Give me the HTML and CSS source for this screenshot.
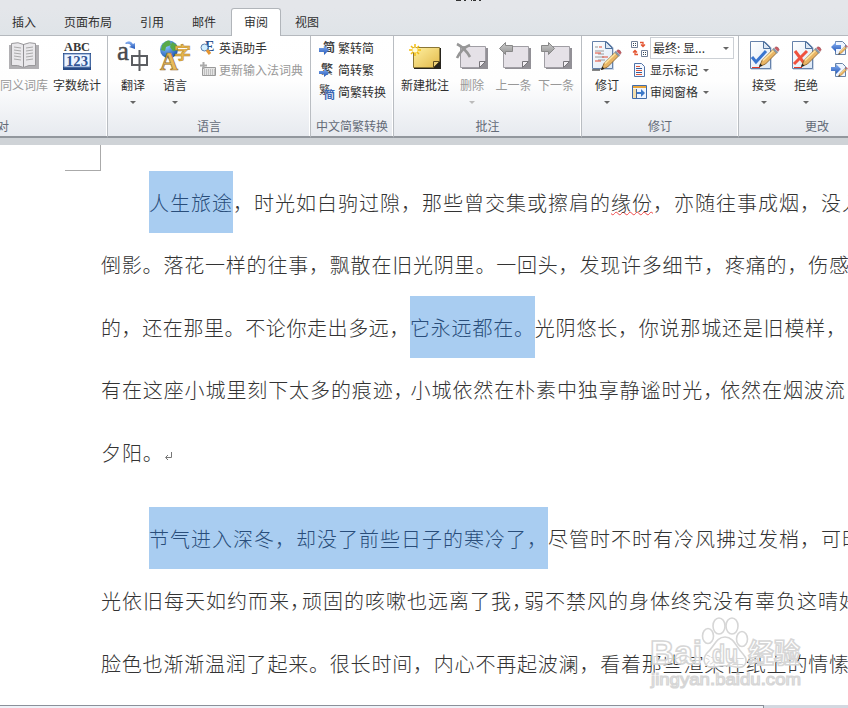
FILE: index.html
```html
<!DOCTYPE html>
<html lang="zh-CN">
<head>
<meta charset="utf-8">
<title>审阅</title>
<link rel="stylesheet" href="styles.css">
</head>
<body>
<svg class="defs" width="0" height="0">
  <defs>
    <linearGradient id="blue" x1="0" y1="0" x2="0" y2="1"><stop offset="0" stop-color="#8ab4f4"/><stop offset="1" stop-color="#2457b8"/></linearGradient>
    <linearGradient id="gold" x1="0" y1="0" x2="1" y2="1"><stop offset="0" stop-color="#fff0a0"/><stop offset="1" stop-color="#e2b94a"/></linearGradient>
    <linearGradient id="gray" x1="0" y1="0" x2="0" y2="1"><stop offset="0" stop-color="#ccc"/><stop offset="1" stop-color="#929292"/></linearGradient>
    <linearGradient id="paper" x1="0" y1="0" x2="1" y2="1"><stop offset="0" stop-color="#fff"/><stop offset="1" stop-color="#dce8f6"/></linearGradient>
    <radialGradient id="globe" cx=".35" cy=".3" r=".8"><stop offset="0" stop-color="#8ccaff"/><stop offset="1" stop-color="#124bad"/></radialGradient>
    <symbol id="note" viewBox="0 0 32 32">
      <path d="M4 8h26v21H4z" fill="#929096"/><path d="M2.500 6.500h25v15l-6 6h-19z" fill="#e5e1e7" stroke="#a09ea4"/><path d="M21.500 27.500v-6h6z" fill="#f2eff3" stroke="#77757a"/>
    </symbol>
    <symbol id="pencil" viewBox="0 0 22 22">
      <path d="M1.500 20.500L4 14.500 15 3.500l3.500 3.500L7.500 18z" fill="#e9b565" stroke="#8c642c" stroke-width=".9"/><path d="M5 14.500L15.500 4.500" stroke="#ffe7a4" stroke-width="1.500"/><path d="M1 21l1.200-3.500 2.300 2.200z" fill="#222"/><path d="M16.500 2l1.500-1.200q2.500.2 3.200 3L20 5.500z" fill="#cf5a62" stroke="#9b555b" stroke-width=".6"/><path d="M15 2.500l4.500 4.500" stroke="#8799a7" stroke-width="1.800"/>
    </symbol>
    <symbol id="page" viewBox="0 0 24 32">
      <path d="M2 2h15l6 6v22H2z" fill="#9ab0cc" opacity=".5"/><path d="M1.500 1.500h14l6 6v21h-20z" fill="url(#paper)" stroke="#6581aa"/><path d="M14.500 1.500v7h7z" fill="#dce6f2" stroke="#50739e"/>
    </symbol>
  </defs>
</svg>
<div class="window">
  <header class="titlebar"><svg width="30" height="2"><path d="M1 0h5v1H1zM9 0h2v1H9zM16 0h1v1h-1zM18 0h3v1h-3zM24 0h2v1h-2z" fill="#333"/></svg></header>
  <nav class="tabs">
    <span class="tab t1">插入</span><span class="tab t2">页面布局</span><span class="tab t3">引用</span><span class="tab t4">邮件</span><span class="tab active">审阅</span><span class="tab t6">视图</span>
  </nav>

  <section class="ribbon">
    <div class="group proofing">
      <div class="tools">
        <div class="big disabled w48"><svg width="34" height="32" viewBox="0 0 34 32"><path d="M2 5h30v24H2z" fill="#b1b0b3"/><path d="M4.500 3.500q7-2 12 1 6-3 12-1v22q-7-1-12 2-6-3-12-2z" fill="#e9e8eb" stroke="#99989b"/><path d="M16.500 4v23" stroke="#929195"/><path d="M7 7l7 1M7 10l7 1M7 13l7 1M7 16l7 1M7 19l7 1M19 8l7-1M19 11l7-1M19 14l7-1M19 17l7-1M19 20l7-1" stroke="#aaa"/></svg><b>同义词库</b></div>
        <div class="big w58"><svg width="32" height="32" viewBox="0 0 32 32"><text x="3" y="11" class="abc" textLength="26" lengthAdjust="spacingAndGlyphs">ABC</text><path d="M2 13h28v17H2z" fill="#284a85"/><path d="M3 14h26v13H3z" fill="#edf4ff" stroke="#6487bd"/><text x="5" y="26" class="n123" textLength="22" lengthAdjust="spacingAndGlyphs">123</text></svg><b>字数统计</b></div>
      </div>
      <div class="caption">校对</div>
    </div>

    <div class="group language">
      <div class="tools">
        <div class="big w42"><svg width="34" height="32" viewBox="0 0 34 32"><text x="1" y="20" class="latin">a</text><path d="M9 3q5-4 8 1l2-1v6l-6-2 2-1q-1-3-5-2z" fill="url(#blue)"/><path d="M16 16h15v9H16zM23.500 10v21" fill="none" stroke="#5b5d61" stroke-width="2"/></svg><b>翻译</b><i></i></div>
        <div class="big w42"><svg width="34" height="32" viewBox="0 0 34 32"><circle cx="11" cy="9.500" r="9" fill="url(#globe)"/><path d="M4 5q5-6 8-4l1 4-5 2-1 4-4-1zM14 2l5 3 1 5-5 1-3-4z" fill="#59a94a"/><text x="16" y="19" class="goldword">字</text><text x="2" y="30" class="goldletter">A</text></svg><b>语言</b><i></i></div>
        <div class="stack">
          <div class="small"><svg width="17" height="16" viewBox="0 0 17 16"><text x="5" y="11" class="eletter">E</text><circle cx="4.500" cy="7.500" r="3.500" fill="#d2efff" stroke="#5c7eac"/><path d="M7 10l3 4" stroke="#e59632" stroke-width="3"/></svg><b>英语助手</b></div>
          <div class="small disabled"><svg width="17" height="16" viewBox="0 0 17 16"><path d="M2.500 5.500h13v8h-13z" fill="#e4e4e4" stroke="#999"/><path d="M4 8h11M4 10h11M4 12h11" stroke="#999" stroke-dasharray="1 1"/><path d="M0 3.500h7M3.500 0v7" stroke="#aaa" stroke-width="2"/></svg><b>更新输入法词典</b></div>
        </div>
      </div>
      <div class="caption">语言</div>
    </div>

    <div class="group convert">
      <div class="tools">
        <div class="stack">
          <div class="small"><svg width="17" height="16" viewBox="0 0 17 16"><text x="4" y="12" class="glyph">简</text><path d="M0 8h5V5l5 5-5 5v-3H0z" fill="url(#blue)"/></svg><b>繁转简</b></div>
          <div class="small"><svg width="17" height="16" viewBox="0 0 17 16"><text x="2" y="12" class="glyph">繁</text><path d="M0 9h5V6l5 5-5 4v-3H0z" fill="url(#blue)"/></svg><b>简转繁</b></div>
          <div class="small"><svg width="17" height="16" viewBox="0 0 17 16"><text x="0" y="10" class="glyph thin">繁</text><text x="5" y="15" class="glyph azure">简</text></svg><b>简繁转换</b></div>
        </div>
      </div>
      <div class="caption">中文简繁转换</div>
    </div>

    <div class="group comments">
      <div class="tools">
        <div class="big w54"><svg width="34" height="32" viewBox="0 0 34 32"><path d="M6 8h27v21H6z" fill="#27241d"/><path d="M5.500 7.500h26v14l-6 6h-20z" fill="url(#gold)" stroke="#8a7635"/><path d="M25.500 27.500v-6h6z" fill="#ecd079" stroke="#5e4c1f"/><path d="M7 4v12M1 10h12M3 6l8 8M11 6l-8 8" stroke="#f2bd12" stroke-width="1.500"/><circle cx="7" cy="10" r="2.500" fill="#fffbd8"/></svg><b>新建批注</b></div>
        <div class="big disabled w40"><svg width="34" height="32" viewBox="0 0 34 32"><use href="#note" x="3" width="32" height="32"/><path d="M2 4q8 4 13 13M15 5Q7 8 2 18" fill="none" stroke="#969696" stroke-width="2.600"/></svg><b>删除</b><i></i></div>
        <div class="big disabled w43"><svg width="34" height="32" viewBox="0 0 34 32"><use href="#note" x="4" width="32" height="32"/><path d="M2.500 8.500l6-6v3h7v6h-7v3z" fill="url(#gray)" stroke="#888"/></svg><b>上一条</b></div>
        <div class="big disabled w42"><svg width="34" height="32" viewBox="0 0 34 32"><use href="#note" x="3" width="32" height="32"/><path d="M15.500 8.500l-6-6v3h-7v6h7v3z" fill="url(#gray)" stroke="#888"/></svg><b>下一条</b></div>
      </div>
      <div class="caption">批注</div>
    </div>

    <div class="group tracking">
      <div class="tools">
        <div class="big w42"><svg width="32" height="32" viewBox="0 0 32 32"><use href="#page" width="24" height="32"/><path d="M4 7h3M4 11h9M7 14h6M4 17h9M7 20h7" stroke="#999"/><path d="M8 7h3M4 13h6M11 17h6M4 21h6" stroke="#e34a34"/><path d="M1 30h8" stroke="#111"/><use href="#pencil" x="9" y="9" width="22" height="22"/></svg><b>修订</b><i></i></div>
        <div class="stack">
          <div class="small view"><svg width="17" height="17" viewBox="0 0 17 17"><path d="M.5 1.500h6v6h-6zM10.500 10.500h6v6h-6z" fill="#fff" stroke="#718098"/><path d="M2 3.500h3M2 5.500h3M12 12.500h3M12 14.500h3" stroke="#345" stroke-dasharray="1 1"/><path d="M9 2.500h3v4m-2-2l2 2 2-2M7 14.500H4v-4m-2 2l2-2 2 2" fill="none" stroke="#e35431" stroke-width="1.300"/></svg><span class="select"><b>最终: 显...</b><i></i></span></div>
          <div class="small"><svg width="17" height="16" viewBox="0 0 17 16"><path d="M3.500 1.500h7l3 3v10h-10z" fill="#f4f8ff" stroke="#5073a9"/><path d="M5 4.500h4M5 8.500h6M5 12.500h6" stroke="#e45839"/><path d="M5 6.500h6M5 10.500h6" stroke="#345c96"/></svg><b>显示标记</b><i></i></div>
          <div class="small"><svg width="17" height="16" viewBox="0 0 17 16"><path d="M1.500 1.500h14v13h-14z" fill="#eef5ff" stroke="#416ca9"/><path d="M2 2h13v2H2z" fill="#e8a43a"/><path d="M2 5h4v9H2z" fill="#f3dfae"/><path d="M6 8h4V5l4 4-4 4v-3H6z" fill="#3c79c9"/><path d="M5.500 5v9" stroke="#4b6794"/></svg><b>审阅窗格</b><i></i></div>
        </div>
      </div>
      <div class="caption">修订</div>
    </div>

    <div class="group changes">
      <div class="tools">
        <div class="big w42"><svg width="32" height="32" viewBox="0 0 32 32"><use href="#page" x="1" width="24" height="32"/><path d="M4 17l4 5 10-11" fill="none" stroke="#3975cf" stroke-width="3"/><path d="M4 27.500h8" stroke="#e43b2a"/><use href="#pencil" x="10" y="6" width="22" height="22"/></svg><b>接受</b><i></i></div>
        <div class="big w42"><svg width="32" height="32" viewBox="0 0 32 32"><use href="#page" x="1" width="24" height="32"/><path d="M5 11l9 12M17 11L4 24" fill="none" stroke="#ef513e" stroke-width="3"/><path d="M4 27.500h8" stroke="#e43b2a"/><use href="#pencil" x="10" y="6" width="22" height="22"/></svg><b>拒绝</b><i></i></div>
        <div class="stack">
          <div class="small"><svg width="17" height="16" viewBox="0 0 17 16"><path d="M4.500 1.500h7l3 3v10h-10z" fill="#eef5ff" stroke="#6984a8"/><path d="M0 7l5-5v3h5v4H5v3z" fill="url(#blue)"/><use href="#pencil" x="7" y="5" width="10" height="10"/></svg></div>
          <div class="small"><svg width="17" height="16" viewBox="0 0 17 16"><path d="M4.500 1.500h7l3 3v10h-10z" fill="#eef5ff" stroke="#6984a8"/><path d="M10 7L5 2v3H0v4h5v3z" fill="url(#blue)"/><use href="#pencil" x="7" y="5" width="10" height="10"/></svg></div>
        </div>
      </div>
      <div class="caption">更改</div>
    </div>
  </section>

  <main class="document">
    <div class="corner"></div>
    <p>
      <span class="line indent p210"><mark>人生旅途</mark>，时光如白驹过隙，那些曾交集或擦肩的<u>缘份</u>，亦随往事成烟，没入</span>
      <span class="line p208">倒影。落花一样的往事，飘散在旧光阴里。一回头，发现许多细节，疼痛的，伤感</span>
      <span class="line p208"><span class="p206">的，还在那里。不论你走出多远，</span><mark>它永远都在。</mark>光阴悠长，你说那城还是旧模样，</span>
      <span class="line p209">有在这座小城里刻下太多的痕迹<span class="c17">，</span>小城依然在朴素中独享静谧时光<span class="c17">，</span>依然在烟波流</span>
      <span class="line p209">夕阳。<svg class="return" width="9" height="9" viewBox="0 0 9 9"><path d="M7.500 0v5.500H2M4 3L1.500 5.500 4 8" fill="none" stroke="#777"/></svg></span>
    </p>
    <p>
      <span class="line indent p210"><mark>节气进入深冬，却没了前些日子的寒冷了，</mark>尽管时不时有冷风拂过发梢，可时</span>
      <span class="line p210">光依旧每天如约而来<span class="c12">，</span>顽固的咳嗽也远离了我<span class="c12">，</span>弱不禁风的身体终究没有辜负这晴好</span>
      <span class="line p208">脸色也渐渐温润了起来。很长时间，内心不再起波澜，看着那些渲染在纸上的情愫</span>
    </p>
  </main>
  <footer class="status"><span></span></footer>
  <svg class="watermark" width="160" height="80" viewBox="0 0 160 80">
    <g fill="#fff" fill-opacity=".8" stroke="#d6d6d6" stroke-width="1.600">
      <ellipse cx="60" cy="22" rx="5.500" ry="7.500"/><ellipse cx="71" cy="12" rx="6" ry="8"/><ellipse cx="84" cy="12" rx="6" ry="8"/><ellipse cx="94" cy="25" rx="5.500" ry="7.500"/>
      <path d="M77 23c9 0 11 10 18 17 7 8 1 15-7 13-8-2-13-2-21 0-10 2-14-7-8-14 7-6 9-16 18-16z"/>
      <text x="2" y="50" class="wm" textLength="52" lengthAdjust="spacingAndGlyphs">Bai</text><text x="64" y="49" class="wm du" textLength="26" lengthAdjust="spacingAndGlyphs">du</text><text x="100" y="49" class="wm cn" textLength="52" lengthAdjust="spacingAndGlyphs">经验</text>
      <text x="3" y="71" class="url" textLength="150" lengthAdjust="spacingAndGlyphs">jingyan.baidu.com</text>
    </g>
  </svg>
</div>
</body>
</html>
```

FILE: styles.css
```css
* { box-sizing: border-box; }
body { margin: 0; background: #fff; }
.defs { position: absolute; }
.window { position: relative; width: 848px; height: 708px; overflow: hidden; display: flex; flex-direction: column; background: #fff; font: 12px/16px "Noto Sans CJK SC", sans-serif; color: #303030; }
.titlebar { height: 8px; flex: none; background: #e4e6ea; padding-left: 455px; }
.titlebar svg { display: block; }
.tabs { height: 28px; flex: none; display: flex; background: linear-gradient(#e4e6ea, #dfe4e8); box-shadow: inset 0 -1px #b5b9be; }
.tab { padding-top: 6px; white-space: nowrap; }
.t1 { width: 52px; padding-left: 12px; }
.t2 { width: 76px; padding-left: 12px; }
.t3 { width: 52px; padding-left: 12px; }
.t4 { width: 51px; padding-left: 12px; }
.active { width: 50px; padding: 5px 0 0 12px; border: 1px solid #b1b5ba; border-bottom: 0; border-radius: 3px 3px 0 0; background: #fff; }
.t6 { padding-left: 14px; }

.ribbon { height: 109px; flex: none; display: flex; align-items: flex-start; background: #cfd3d7; }
.group { height: 102px; flex: none; display: flex; flex-direction: column; background: linear-gradient(#fff 0, #fefefe 45%, #f1f3f6 75%, #e7eaef 100%); border-right: 1px solid #b9bdc2; border-bottom: 2px solid #92979d; box-shadow: inset -1px 0 #fff; overflow: hidden; }
.proofing { width: 108px; }
.language { width: 203px; }
.convert { width: 83px; }
.comments { width: 188px; }
.tracking { width: 157px; }
.changes { width: 157px; }
.tools { height: 82px; display: flex; padding-top: 4px; }
.language .tools { padding-left: 4px; }
.convert .tools { padding-left: 8px; }
.comments .tools { padding-left: 4px; }
.tracking .tools { padding-left: 4px; }
.changes .tools { padding-left: 4px; }
.caption { text-align: center; color: #646b78; white-space: nowrap; }
.proofing .caption { text-align: left; margin-left: -15px; }
b { font-weight: 400; white-space: nowrap; }
.big { flex: none; display: flex; flex-direction: column; align-items: center; }
.big > svg { display: block; flex: none; }
.big b { margin-top: 5px; }
.tools i { width: 0; height: 0; border: 3px solid transparent; border-top-color: #666; border-bottom: 0; }
.big i { margin-top: 8px; }
.disabled { color: #989898; }
.disabled i { border-top-color: #bbb; }
.w40 { width: 40px; }
.w42 { width: 42px; }
.w43 { width: 43px; }
.w48 { width: 48px; }
.w54 { width: 54px; }
.w58 { width: 58px; }
.stack { display: flex; flex-direction: column; flex: none; margin-top: -3px; }
.language .stack { margin-left: 4px; }
.convert .stack { margin-left: 0; }
.tracking .stack { margin-left: 3px; }
.changes .stack { margin-left: 4px; }
.small { height: 22px; display: flex; align-items: center; gap: 2px; }
.small > i { margin-left: 3px; }
.small > svg { flex: none; }
.select { width: 84px; height: 22px; border: 1px solid #ccd0d5; background: #fff; display: flex; align-items: center; justify-content: space-between; padding: 0 4px 0 2px; }
.abc { font: bold 12px "Liberation Serif", serif; fill: #383838; }
.n123 { font: bold 15px "Liberation Serif", serif; fill: #315596; }
.latin { font: 27px "Liberation Serif", serif; fill: #48494c; stroke: #48494c; stroke-width: .4; }
.goldword { font: bold 17px "Noto Sans CJK SC", sans-serif; fill: #e7b64c; stroke: #a97922; stroke-width: .4; }
.goldletter { font: bold 25px "Liberation Serif", serif; fill: #e8bb59; stroke: #98702c; stroke-width: .7; }
.eletter { font: bold 14px "Liberation Serif", serif; fill: #284f8d; }
.glyph { font: bold 12px "Noto Sans CJK SC", sans-serif; fill: #444; }
.thin { font-size: 11px; font-weight: 400; }
.azure { fill: #3766b5; font-size: 11px; }

.document { height: 560px; flex: none; overflow: hidden; }
.corner { width: 101px; height: 26px; background: linear-gradient(#aaa, #aaa) 65px 25px / 36px 1px no-repeat, linear-gradient(#aaa, #aaa) 100px 0 / 1px 26px no-repeat; }
.document p { margin: 0 0 24px 101px; width: 780px; font-size: 20px; line-height: 64.4px; font-weight: 300; color: #333; }
.line { display: block; white-space: nowrap; height: 62.4px; }
.indent { padding-left: 48px; }
.p206 { letter-spacing: .6px; }
.p208 { letter-spacing: .8px; }
.p209 { letter-spacing: .9px; }
.p210 { letter-spacing: 1px; }
.c17 { letter-spacing: -3px; }
.c12 { letter-spacing: -8px; }
mark { display: inline-block; height: 62px; background: #a9cdf1; color: #294d7a; vertical-align: top; }
u { text-decoration: underline wavy #f04848 1px; text-underline-offset: 0; text-decoration-skip-ink: none; }
.status { height: 3px; flex: none; background: #d3d8e0; }
.status span { display: block; width: 764px; height: 3px; background: #eef2f8; border-top: 1px solid #8b9099; border-right: 1px solid #8b9099; }
.watermark { position: absolute; left: 648px; top: 614px; }
.wm { font: bold 34px "Liberation Sans", sans-serif; }
.du { font-size: 25px; }
.cn { font: bold 27px "Noto Sans CJK SC", sans-serif; }
.url { font: 17px "Liberation Sans", sans-serif; stroke-width: 1.2; }
```
